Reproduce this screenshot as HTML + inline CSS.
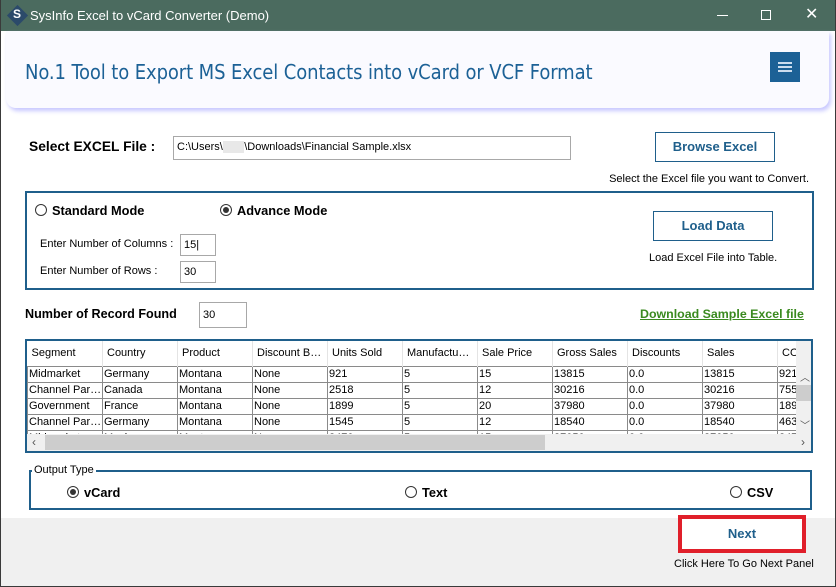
<!DOCTYPE html>
<html><head><style>
*{box-sizing:border-box;margin:0;padding:0}
body{width:836px;height:587px;overflow:hidden;font-family:"Liberation Sans",sans-serif;background:#fff;position:relative;font-size:12px;color:#000}
.a{position:absolute}
.win{left:0;top:0;width:836px;height:587px;border:1px solid #3a3a3a;border-top:none}
.tb{left:0;top:0;width:836px;height:31px;background:#4b6b5f;color:#fff}
.inp{background:#fff;border:1px solid #a8a8a8;font-size:11px;padding-left:3px;line-height:20px}
.btn{border:1px solid #1f5f8b;background:#fff;color:#1f5f8b;font-weight:bold;font-size:13px;text-align:center}
.rad{width:12px;height:12px;border:1px solid #333;border-radius:50%;background:#fff}
.rad.on::after{content:"";position:absolute;left:2px;top:2px;width:6px;height:6px;border-radius:50%;background:#333}
table{border-collapse:collapse;font-size:11px;table-layout:fixed}
td{border:1px solid #8a8a8a;height:16px;padding-left:1px;white-space:nowrap;overflow:hidden;line-height:14px}
th{font-weight:normal;text-align:left;padding-left:4px;height:25px;border-right:1px solid #e4e4e4;white-space:nowrap;overflow:hidden}
</style></head><body>
<div class="a tb">
 <div class="a" style="left:10px;top:8px;width:15px;height:15px;background:#2b4a6a;transform:rotate(45deg);"></div>
 <div class="a" style="left:13px;top:7px;font-size:12px;font-weight:bold">S</div>
 <div class="a" style="left:30px;top:8px;font-size:13px">SysInfo Excel to vCard Converter (Demo)</div>
 <div class="a" style="left:717px;top:15px;width:11px;height:1px;background:#fff"></div>
 <div class="a" style="left:761px;top:10px;width:10px;height:10px;border:1px solid #fff"></div>
 <div class="a" style="left:805px;top:4px;font-size:16px">✕</div>
</div>
<div class="a" style="left:6px;top:31px;width:823px;height:77px;background:#fafaff;border-radius:0 0 10px 10px;box-shadow:2px 3px 4px #c8c8ff"></div>
<div class="a" style="left:25px;top:60px;font-size:20px;color:#1c6196;font-family:'DejaVu Sans Condensed','DejaVu Sans',sans-serif;letter-spacing:-0.1px">No.1 Tool to Export MS Excel Contacts into vCard or VCF Format</div>
<div class="a" style="left:770px;top:52px;width:30px;height:30px;background:#1c6196">
 <div class="a" style="left:8px;top:10px;width:14px;height:2px;background:#cde"></div>
 <div class="a" style="left:8px;top:14px;width:14px;height:2px;background:#cde"></div>
 <div class="a" style="left:8px;top:18px;width:14px;height:2px;background:#cde"></div>
</div>

<div class="a" style="left:29px;top:139px;font-size:13.8px;font-weight:bold">Select EXCEL File :</div>
<div class="a inp" style="left:173px;top:136px;width:398px;height:24px">C:\Users\<span style="color:#ccc;background:#e8e8e8">&nbsp;&nbsp;&nbsp;&nbsp;&nbsp;&nbsp;&nbsp;</span>\Downloads\Financial Sample.xlsx</div>
<div class="a btn" style="left:655px;top:132px;width:120px;height:30px;line-height:28px">Browse Excel</div>
<div class="a" style="left:500px;top:173px;width:309px;text-align:right;font-size:11px">Select the Excel file you want to Convert.</div>

<div class="a" style="left:25px;top:191px;width:789px;height:99px;border:2px solid #1f5f8b"></div>
<div class="a rad" style="left:35px;top:204px"></div>
<div class="a" style="left:52px;top:203px;font-size:12.8px;font-weight:bold">Standard Mode</div>
<div class="a rad on" style="left:220px;top:204px"></div>
<div class="a" style="left:237px;top:203px;font-size:12.8px;font-weight:bold">Advance Mode</div>
<div class="a" style="left:40px;top:238px;font-size:11px">Enter Number of Columns :</div>
<div class="a inp" style="left:180px;top:234px;width:36px;height:22px">15|</div>
<div class="a" style="left:40px;top:265px;font-size:11px">Enter Number of Rows :</div>
<div class="a inp" style="left:180px;top:261px;width:36px;height:22px">30</div>
<div class="a btn" style="left:653px;top:211px;width:120px;height:30px;line-height:28px">Load Data</div>
<div class="a" style="left:649px;top:252px;font-size:11px">Load Excel File into Table.</div>

<div class="a" style="left:25px;top:307px;font-size:12.6px;font-weight:bold">Number of Record Found</div>
<div class="a inp" style="left:199px;top:302px;width:48px;height:26px;line-height:24px">30</div>
<div class="a" style="left:640px;top:307px;font-size:12.4px;font-weight:bold;color:#3a8a1f;text-decoration:underline">Download Sample Excel file</div>

<div class="a" style="left:25px;top:339px;width:788px;height:114px;border:2px solid #1f5f8b;overflow:hidden;background:#fff">
<table class="a" style="left:0;top:0;width:790px">
<colgroup><col style="width:75px"><col style="width:75px"><col style="width:75px"><col style="width:75px"><col style="width:75px"><col style="width:75px"><col style="width:75px"><col style="width:75px"><col style="width:75px"><col style="width:75px"><col style="width:40px"></colgroup>
<tr><th>Segment</th><th>Country</th><th>Product</th><th>Discount B…</th><th>Units Sold</th><th>Manufactu…</th><th>Sale Price</th><th>Gross Sales</th><th>Discounts</th><th>Sales</th><th>CO</th></tr>
<tr><td>Midmarket</td><td>Germany</td><td>Montana</td><td>None</td><td>921</td><td>5</td><td>15</td><td>13815</td><td>0.0</td><td>13815</td><td>921</td></tr>
<tr><td>Channel Par…</td><td>Canada</td><td>Montana</td><td>None</td><td>2518</td><td>5</td><td>12</td><td>30216</td><td>0.0</td><td>30216</td><td>755</td></tr>
<tr><td>Government</td><td>France</td><td>Montana</td><td>None</td><td>1899</td><td>5</td><td>20</td><td>37980</td><td>0.0</td><td>37980</td><td>189</td></tr>
<tr><td>Channel Par…</td><td>Germany</td><td>Montana</td><td>None</td><td>1545</td><td>5</td><td>12</td><td>18540</td><td>0.0</td><td>18540</td><td>463</td></tr>
<tr><td>Midmarket</td><td>Mexico</td><td>Montana</td><td>None</td><td>2470</td><td>5</td><td>15</td><td>37050</td><td>0.0</td><td>37050</td><td>247</td></tr>
</table>
<div class="a" style="left:769px;top:0;width:17px;height:93px;background:#f0f0f0">
 <div class="a" style="left:4px;top:28px;font-size:10px;color:#555">︿</div>
 <div class="a" style="left:0;top:44px;width:17px;height:16px;background:#cdcdcd"></div>
 <div class="a" style="left:4px;top:76px;font-size:10px;color:#555">﹀</div>
</div>
<div class="a" style="left:0;top:93px;width:786px;height:17px;background:#f0f0f0">
 <div class="a" style="left:5px;top:1px;color:#555">‹</div>
 <div class="a" style="left:18px;top:1px;width:500px;height:15px;background:#cdcdcd"></div>
 <div class="a" style="left:774px;top:1px;color:#555">›</div>
</div>
</div>

<div class="a" style="left:29px;top:470px;width:783px;height:40px;border:2px solid #1f5f8b"></div>
<div class="a" style="left:32px;top:464px;background:#fff;font-size:11px;padding:0 2px">Output Type</div>
<div class="a rad on" style="left:67px;top:486px"></div>
<div class="a" style="left:84px;top:485px;font-size:12.8px;font-weight:bold">vCard</div>
<div class="a rad" style="left:405px;top:486px"></div>
<div class="a" style="left:422px;top:485px;font-size:12.8px;font-weight:bold">Text</div>
<div class="a rad" style="left:730px;top:486px"></div>
<div class="a" style="left:747px;top:485px;font-size:12.8px;font-weight:bold">CSV</div>

<div class="a" style="left:1px;top:518px;width:834px;height:68px;background:#f0f0f0"></div>
<div class="a" style="left:678px;top:515px;width:128px;height:38px;border:4px solid #e01f2a;background:#fff;color:#1f5f8b;font-weight:bold;font-size:13px;text-align:center;line-height:30px">Next</div>
<div class="a" style="left:674px;top:558px;font-size:11px">Click Here To Go Next Panel</div>
<div class="a win"></div>
</body></html>
